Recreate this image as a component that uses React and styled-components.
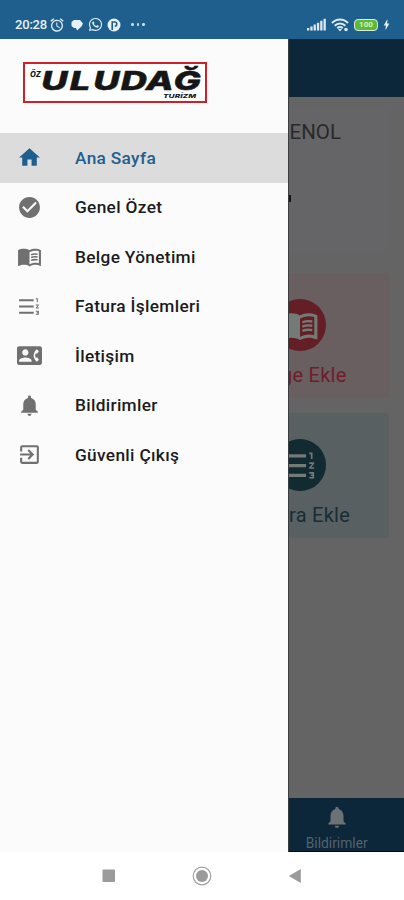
import styled, { createGlobalStyle } from "styled-components";
import {
  MdHome,
  MdCheckCircle,
  MdFormatListNumberedRtl,
  MdContactPhone,
  MdNotifications,
  MdExitToApp,
  MdAlarm,
  MdBolt,
} from "react-icons/md";
import { FaWhatsapp } from "react-icons/fa";

// open book with a solid left page
const OpenBook = ({ size }) => (
  <svg width={size} height={size} viewBox="0 0 24 24" fill="currentColor">
    <path d="M21 5c-1.110-.35-2.330-.5-3.500-.5-1.950 0-4.050.4-5.500 1.500-1.450-1.100-3.550-1.500-5.500-1.500S2.450 4.900 1 6v14.650c0 .25.25.5.5.5.1 0 .15-.05.25-.05C3.100 20.450 5.050 20 6.500 20c1.950 0 4.050.4 5.500 1.500 1.350-.85 3.800-1.500 5.500-1.500 1.650 0 3.350.3 4.750 1.050.1.05.15.05.25.05.25 0 .5-.25.5-.5V6c-.6-.45-1.250-.75-2-1zm0 13.500c-1.100-.35-2.300-.5-3.500-.5-1.700 0-4.150.65-5.500 1.500V8c1.350-.85 3.800-1.500 5.500-1.500 1.200 0 2.400.15 3.500.5v11.500z" />
    <path
      fill="none"
      stroke="currentColor"
      strokeWidth="1.500"
      d="M13.500 10.300c1.900-.8 4-.9 6.300-.5M13.500 13c1.900-.8 4-.9 6.300-.5M13.500 15.700c1.900-.8 4-.9 6.300-.5"
    />
  </svg>
);

const menuItems = [
  { label: "Ana Sayfa", icon: MdHome, active: true },
  { label: "Genel Özet", icon: MdCheckCircle },
  { label: "Belge Yönetimi", icon: OpenBook },
  { label: "Fatura İşlemleri", icon: MdFormatListNumberedRtl },
  { label: "İletişim", icon: MdContactPhone },
  { label: "Bildirimler", icon: MdNotifications },
  { label: "Güvenli Çıkış", icon: MdExitToApp },
];

const Logo = () => (
  <LogoBox>
    <svg width="180" height="37" viewBox="0 0 180 37">
      <g fontFamily="Inter, sans-serif" fontWeight="800" fontStyle="italic" fill="#161616">
        <text x="5" y="13" fontSize="7.500" textLength="11" lengthAdjust="spacingAndGlyphs">ÖZ</text>
        <text
          transform="scale(1.42 1)"
          x="11.500 31.500 48 67.500 85 104.500"
          y="26.500"
          fontSize="25.500"
          stroke="#161616"
          strokeWidth=".5"
        >
          ULUDAĞ
        </text>
        <text x="138" y="34" fontSize="5" textLength="33" lengthAdjust="spacingAndGlyphs">TURİZM</text>
      </g>
    </svg>
  </LogoBox>
);

const StatusIcons = () => (
  <StatusRight>
    <svg width="19" height="13" viewBox="0 0 19 13" fill="#dce9f2">
      <rect x="0" y="10" width="2.300" height="2.500" />
      <rect x="3.300" y="8.500" width="2.300" height="4" />
      <rect x="6.600" y="6.500" width="2.300" height="6" />
      <rect x="9.900" y="4.800" width="2.300" height="7.700" />
      <rect x="13.200" y="2.800" width="2.300" height="9.700" />
      <rect x="16.500" y="0.800" width="2.300" height="11.700" />
    </svg>
    <svg width="18" height="14" viewBox="0 0 18 14" fill="none" stroke="#dce9f2" strokeWidth="2.100">
      <path d="M1 5C5.500 .3 12.500 .3 17 5M3.700 7.700c3-3 7.600-3 10.600 0M6.300 10.200c1.500-1.500 3.900-1.500 5.400 0" />
      <path d="M7 11l2 2.500 2-2.500z" fill="#dce9f2" stroke="none" />
      <circle cx="15" cy="11.500" r="1.800" fill="#dce9f2" stroke="none" />
    </svg>
    <Battery>100</Battery>
    <MdBolt size={13} />
  </StatusRight>
);

const App = () => {
  return (
    <Phone>
      <GlobalStyle />
      <StatusBar>
        <StatusLeft>
          <Clock>20:28</Clock>
          <MdAlarm size={16} />
          <svg width="12" height="12" viewBox="0 0 12 12" fill="#e6f0f7">
            <path d="M3 1h6l3 3.500-1.500 3L6 11.500 5 9H3L.5 7V3z" />
          </svg>
          <FaWhatsapp size={15} />
          <svg width="14" height="14" viewBox="0 0 14 14">
            <circle cx="7" cy="7" r="6.500" fill="#e6f0f7" />
            <path d="M5.200 12V4h2.500a2 2 0 0 1 0 4.200" fill="none" stroke="#1f5f8d" strokeWidth="1.600" />
          </svg>
          <Dots>
            <i />
            <i />
            <i />
          </Dots>
        </StatusLeft>
        <StatusIcons />
      </StatusBar>

      <Stage>
        <Page>
          <AppBar />
          <Content>
            <UserCard>
              <h3>ENOL</h3>
              <Mark />
            </UserCard>
            <ActionCard $bg="#695e60" $color="#6f1d2b">
              <Circle $bg="#641e25">
                <OpenBook size={38} />
              </Circle>
              <p>Belge Ekle</p>
            </ActionCard>
            <ActionCard $bg="#586062" $color="#182d35">
              <Circle $bg="#122a31">
                <MdFormatListNumberedRtl size={39} />
              </Circle>
              <p>Fatura Ekle</p>
            </ActionCard>
          </Content>
          <Tabs>
            <Tab>
              <MdNotifications size={26} />
              <span>Bildirimler</span>
            </Tab>
          </Tabs>
        </Page>

        <Drawer>
          <DrawerHeader>
            <Logo />
          </DrawerHeader>
          {menuItems.map(({ label, icon: Icon, active }) => (
            <MenuItem key={label} $active={active}>
              <Icon size={25} />
              <span>{label}</span>
            </MenuItem>
          ))}
        </Drawer>
      </Stage>

      <SystemNav>
        <svg width="14" height="14" viewBox="0 0 14 14">
          <rect x="0.500" y="0.500" width="12.500" height="12.500" rx="1" fill="#9b9b9b" />
        </svg>
        <svg width="20" height="20" viewBox="0 0 20 20">
          <circle cx="10" cy="10" r="8.800" fill="none" stroke="#a2a2a2" strokeWidth="1.200" />
          <circle cx="10" cy="10" r="6" fill="#9b9b9b" />
        </svg>
        <svg width="14" height="16" viewBox="0 0 14 16">
          <path d="M.8 8L12.800 1v14z" fill="#9b9b9b" />
        </svg>
      </SystemNav>
    </Phone>
  );
};

const GlobalStyle = createGlobalStyle`
  * {
    margin: 0;
    padding: 0;
    box-sizing: border-box;
  }

  body {
    background: #fff;
    font-family: Roboto, sans-serif;
  }

  svg {
    display: block;
    flex-shrink: 0;
  }
`;

const Phone = styled.div`
  width: 404px;
  height: 900px;
  display: flex;
  flex-direction: column;
  overflow: hidden;
`;

const StatusBar = styled.header`
  height: 39px;
  padding: 10px 13px 0 15px;
  display: flex;
  justify-content: space-between;
  align-items: center;
  background: #1f5f8d;
  color: #e6f0f7;
`;

const StatusLeft = styled.div`
  display: flex;
  align-items: center;

  svg:nth-of-type(1) {
    margin-left: 2px;
  }
  svg:nth-of-type(2) {
    margin-left: 6px;
  }
  svg:nth-of-type(3) {
    margin-left: 5px;
  }
  svg:nth-of-type(4) {
    margin-left: 4px;
  }
`;

const Clock = styled.span`
  width: 32px;
  font-size: 13px;
  font-weight: 500;
  letter-spacing: -0.2px;
`;

const Dots = styled.div`
  display: flex;
  gap: 3px;
  margin-left: 10px;

  i {
    width: 2.500px;
    height: 2.500px;
    border-radius: 50%;
    background: #c7dbe8;
  }
`;

const StatusRight = styled.div`
  display: flex;
  align-items: center;
  gap: 5px;
  margin-right: -2px;

  svg:last-child {
    margin-left: -3px;
  }
`;

const Battery = styled.span`
  width: 24px;
  height: 12px;
  border: 1.500px solid #d9eadf;
  border-radius: 4px;
  background: #5fb83c;
  color: #d8f5b0;
  font-size: 8px;
  font-weight: 700;
  line-height: 9.500px;
  text-align: center;
`;

const Stage = styled.div`
  position: relative;
  height: 813px;
`;

const Page = styled.div`
  height: 100%;
  display: flex;
  flex-direction: column;
  background: #646464;
`;

const AppBar = styled.div`
  height: 58px;
  background: #0c273a;
`;

const Content = styled.main`
  flex: 1;
  padding: 10px 15px 0 210px;
`;

const UserCard = styled.section`
  height: 144px;
  margin-bottom: 22px;
  padding-top: 13px;
  border-radius: 5px;
  background: #656567;

  h3 {
    padding-right: 48px;
    color: #29292a;
    font-size: 20.500px;
    font-weight: 400;
    line-height: 24px;
    text-align: right;
  }
`;

const Mark = styled.div`
  width: 3px;
  height: 7px;
  margin: 51px 0 0 78px;
  background: #161616;
`;

const ActionCard = styled.section`
  height: 125px;
  margin-bottom: 15px;
  padding-top: 26px;
  display: flex;
  flex-direction: column;
  align-items: center;
  border-radius: 4px;
  background: ${({ $bg }) => $bg};
  color: ${({ $color }) => $color};

  p {
    margin-top: 12px;
    font-size: 20px;
    letter-spacing: 0.25px;
    line-height: 24px;
  }
`;

const Circle = styled.div`
  width: 52px;
  height: 52px;
  display: flex;
  align-items: center;
  justify-content: center;
  border-radius: 50%;
  background: ${({ $bg }) => $bg};
  color: #747b76;
`;

const Tabs = styled.nav`
  height: 54px;
  display: flex;
  justify-content: flex-end;
  background: #0c273a;
  border-bottom: 1px solid #04090d;
`;

const Tab = styled.div`
  width: 33.333%;
  padding-top: 6px;
  display: flex;
  flex-direction: column;
  align-items: center;
  color: #6c7174;

  span {
    margin-top: 5px;
    color: #53626c;
    font-size: 13.800px;
    line-height: 16px;
  }
`;

const Drawer = styled.aside`
  position: absolute;
  top: 0;
  left: 0;
  width: 289px;
  height: 100%;
  background: #fbfbfb;
  border-right: 1px solid #3a3d3f;
`;

const DrawerHeader = styled.div`
  height: 94px;
  padding: 23px 0 0 23px;
`;

const LogoBox = styled.div`
  width: 184px;
  height: 41px;
  border: 2px solid #cf2028;
  background: #fff;
`;

const MenuItem = styled.div`
  height: 49.500px;
  padding-left: 17px;
  display: flex;
  align-items: center;
  background: ${({ $active }) => ($active ? "#dcdcdc" : "transparent")};
  color: ${({ $active }) => ($active ? "#1f5f8d" : "#707070")};

  span {
    margin-left: 33px;
    color: ${({ $active }) => ($active ? "#1f5f8d" : "#1b1b1b")};
    font-size: 17.300px;
    font-weight: 500;
    letter-spacing: 0.32px;
  }
`;

const SystemNav = styled.footer`
  height: 48px;
  padding: 0 102px 0 102px;
  display: flex;
  align-items: center;
  justify-content: space-between;
  background: #fff;
`;

export default App;
